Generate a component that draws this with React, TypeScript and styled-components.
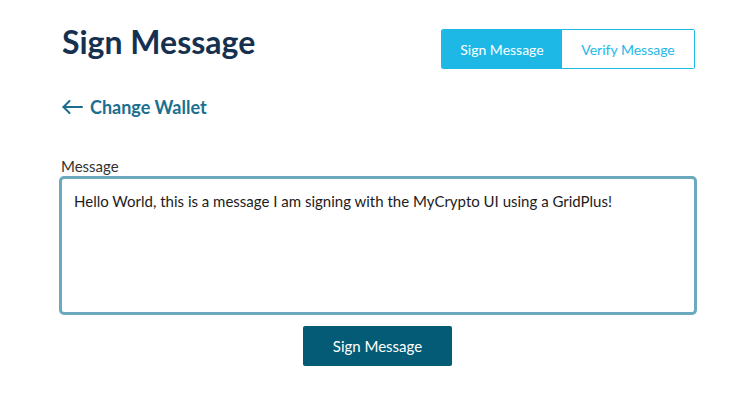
import React, { useState } from 'react';
import styled, { createGlobalStyle } from 'styled-components';

const GlobalStyle = createGlobalStyle`
  body {
    margin: 0;
    background: #ffffff;
    font-family: Lato, 'Noto Sans', sans-serif;
  }
`;

const Page = styled.div`
  width: 750px;
  height: 399px;
  box-sizing: border-box;
  padding: 22px 53px 0 59px;
`;

const Header = styled.div`
  display: flex;
  justify-content: space-between;
  align-items: flex-start;
`;

const Title = styled.h1`
  margin: 0 0 0 3px;
  font-size: 32px;
  line-height: 40px;
  font-weight: 700;
  color: #163150;
`;

const Toggle = styled.div`
  display: flex;
  margin: 7px 2px 0 0;
  border: 1px solid #1eb8e7;
  border-radius: 2px;
  overflow: hidden;
`;

const ToggleButton = styled.button<{ $active?: boolean; $width: number }>`
  width: ${(p) => p.$width}px;
  height: 38px;
  padding: 0;
  border: none;
  font-family: inherit;
  font-size: 14px;
  cursor: pointer;
  background: ${(p) => (p.$active ? '#1eb8e7' : '#ffffff')};
  color: ${(p) => (p.$active ? '#ffffff' : '#1eb8e7')};
`;

const BackLink = styled.a`
  display: flex;
  align-items: center;
  gap: 7px;
  margin: 27px 0 0 3px;
  font-size: 18px;
  font-weight: 700;
  color: #1a6f8f;
  text-decoration: none;
  cursor: pointer;
`;

const Label = styled.label`
  display: block;
  margin: 39px 0 1px 2px;
  font-size: 15px;
  color: #333333;
`;

const MessageBox = styled.textarea`
  display: block;
  width: 100%;
  height: 139px;
  box-sizing: border-box;
  padding: 12px 12px;
  border: 3px solid #6aa9c0;
  border-radius: 5px;
  resize: none;
  font-family: inherit;
  font-size: 15px;
  line-height: 20px;
  color: #1c1c1c;
  outline: none;
`;

const Actions = styled.div`
  display: flex;
  justify-content: center;
  margin: 11px 1px 0 0;
`;

const SubmitButton = styled.button`
  width: 149px;
  height: 40px;
  border: none;
  border-radius: 2px;
  background: #035b76;
  color: #ffffff;
  font-family: inherit;
  font-size: 15px;
  cursor: pointer;
`;

const ArrowIcon = () => (
  <svg width="21" height="14" viewBox="0 0 21 14" fill="none" stroke="currentColor" strokeWidth="2" strokeLinecap="round">
    <path d="M20 7H1.5" />
    <path d="M7.5 1L1.5 7l6 6" />
  </svg>
);

export default function App() {
  const [mode, setMode] = useState<'sign' | 'verify'>('sign');
  const [message, setMessage] = useState(
    'Hello World, this is a message I am signing with the MyCrypto UI using a GridPlus!'
  );
  return (
    <>
      <GlobalStyle />
      <Page>
        <Header>
          <Title>Sign Message</Title>
          <Toggle>
            <ToggleButton $width={120} $active={mode === 'sign'} onClick={() => setMode('sign')}>
              Sign Message
            </ToggleButton>
            <ToggleButton $width={132} $active={mode === 'verify'} onClick={() => setMode('verify')}>
              Verify Message
            </ToggleButton>
          </Toggle>
        </Header>
        <BackLink>
          <ArrowIcon />
          Change Wallet
        </BackLink>
        <Label htmlFor="message">Message</Label>
        <MessageBox id="message" value={message} onChange={(e) => setMessage(e.target.value)} />
        <Actions>
          <SubmitButton>Sign Message</SubmitButton>
        </Actions>
      </Page>
    </>
  );
}
